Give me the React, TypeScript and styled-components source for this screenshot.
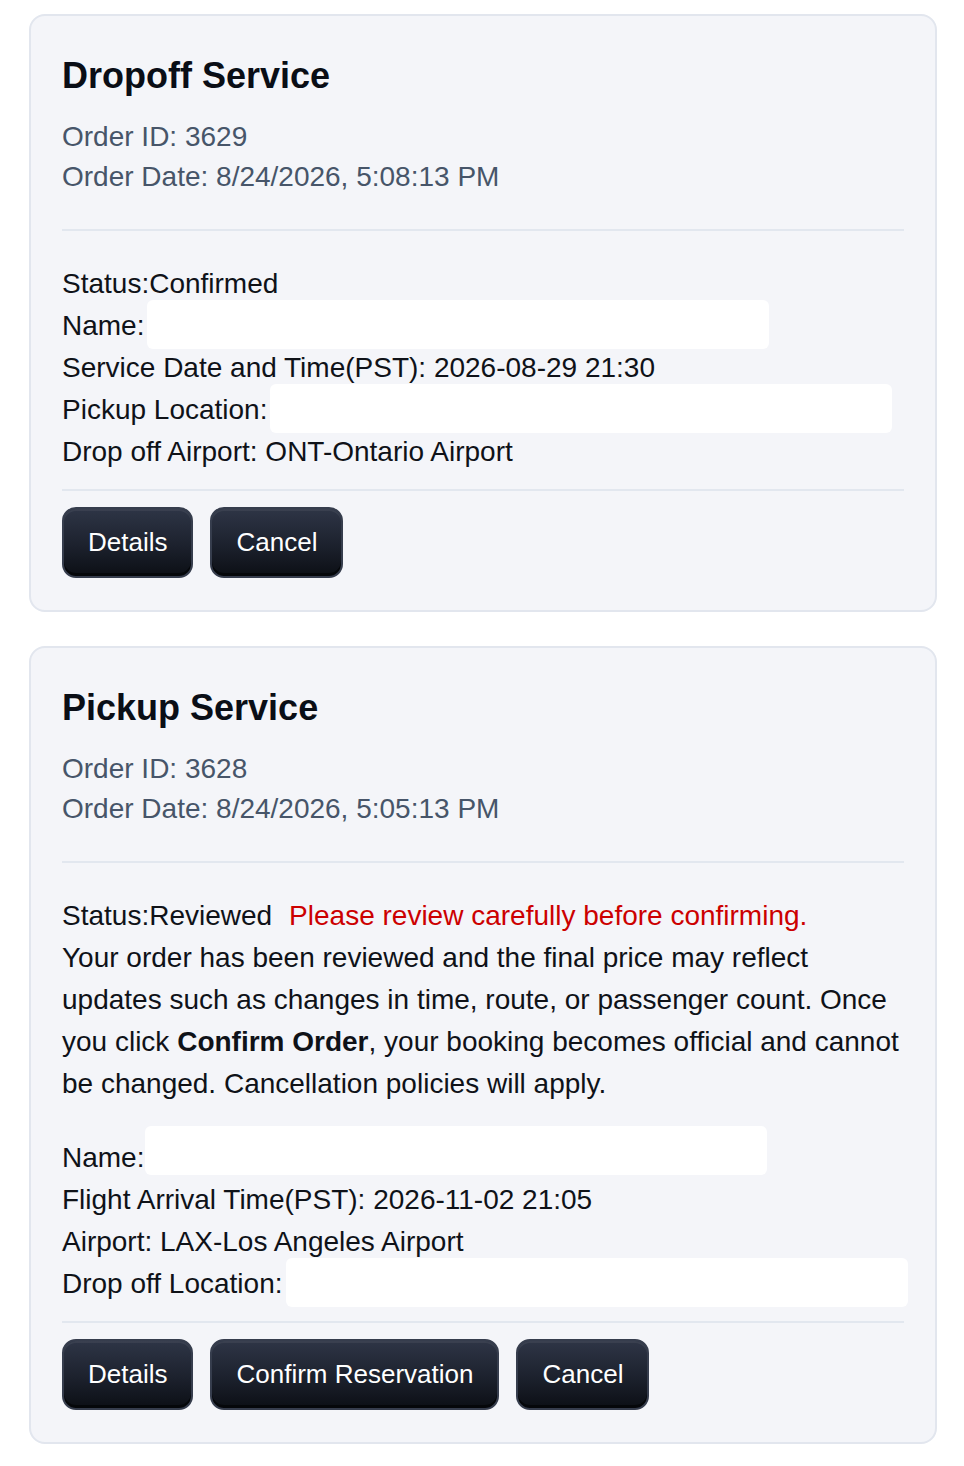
import React from "react";
import styled, { createGlobalStyle } from "styled-components";

const GlobalStyle = createGlobalStyle`
  html, body {
    margin: 0;
    padding: 0;
    background: #ffffff;
  }
  body {
    font-family: "Liberation Sans", Arial, Helvetica, sans-serif;
    color: #0f1218;
  }
  * { box-sizing: border-box; }
`;

const Page = styled.main`
  display: flex;
  flex-direction: column;
  gap: 34px;
  padding: 14px 27px 22px 29px;
`;

const Card = styled.section`
  background: #f4f5f9;
  border: 2px solid #e2e6ee;
  border-radius: 16px;
  padding: 32px 31px 32px 31px;
`;

const Title = styled.h2`
  margin: 0 0 13px;
  font-size: 36px;
  line-height: 56px;
  font-weight: 700;
  color: #0a0e16;
`;

const Meta = styled.div`
  font-size: 28px;
  line-height: 40px;
  color: #475569;
`;

const Divider = styled.hr<{ $space: number }>`
  border: 0;
  height: 2px;
  background: #e2e7ef;
  margin: ${(p) => p.$space}px 0;
`;

const Details = styled.div`
  font-size: 28px;
  line-height: 42px;
  color: #0f1218;
`;

const Line = styled.div`
  white-space: nowrap;
`;

const Warning = styled.span`
  color: #cc0000;
  margin-left: 17px;
`;

const Notice = styled.p`
  margin: 0 0 32px;
  padding-right: 2px;
`;

const Redacted = styled.span<{ $shift?: number; $gap?: number }>`
  display: inline-block;
  vertical-align: top;
  width: 622px;
  height: 49px;
  background: #ffffff;
  border-radius: 6px;
  margin-top: ${(p) => -(p.$shift ?? 5)}px;
  margin-bottom: ${(p) => (p.$shift ?? 5) - 7}px;
  margin-left: ${(p) => p.$gap ?? 3}px;
`;

const ButtonRow = styled.div`
  display: flex;
  gap: 17px;
`;

const Button = styled.button`
  display: inline-flex;
  align-items: center;
  justify-content: center;
  height: 71px;
  padding: 0 24px;
  border: 2px solid #363d4d;
  border-radius: 14px;
  background: linear-gradient(180deg, #2e3546 0%, #1c212d 55%, #0c0f15 100%);
  box-shadow: inset 0 -3px 0 #05070a, inset 0 2px 0 rgba(255, 255, 255, 0.06);
  color: #ffffff;
  font-family: "Liberation Sans", Arial, Helvetica, sans-serif;
  font-size: 26px;
  font-weight: 400;
  cursor: pointer;
`;

export default function App() {
  return (
    <>
      <GlobalStyle />
      <Page>
        <Card>
          <Title>Dropoff Service</Title>
          <Meta>
            <div>Order ID: 3629</div>
            <div>Order Date: 8/24/2026, 5:08:13 PM</div>
          </Meta>
          <Divider $space={32} />
          <Details>
            <Line>Status:Confirmed</Line>
            <Line>
              Name:<Redacted />
            </Line>
            <Line>Service Date and Time(PST): 2026-08-29 21:30</Line>
            <Line>
              Pickup Location:<Redacted />
            </Line>
            <Line>Drop off Airport: ONT-Ontario Airport</Line>
          </Details>
          <Divider $space={16} />
          <ButtonRow>
            <Button>Details</Button>
            <Button>Cancel</Button>
          </ButtonRow>
        </Card>

        <Card>
          <Title>Pickup Service</Title>
          <Meta>
            <div>Order ID: 3628</div>
            <div>Order Date: 8/24/2026, 5:05:13 PM</div>
          </Meta>
          <Divider $space={32} />
          <Details>
            <Line>
              Status:Reviewed
              <Warning>Please review carefully before confirming.</Warning>
            </Line>
            <Notice>
              Your order has been reviewed and the final price may reflect
              updates such as changes in time, route, or passenger count. Once
              you click <b>Confirm Order</b>, your booking becomes official and
              cannot be changed. Cancellation policies will apply.
            </Notice>
            <Line>
              Name:<Redacted $shift={11} $gap={1} />
            </Line>
            <Line>Flight Arrival Time(PST): 2026-11-02 21:05</Line>
            <Line>Airport: LAX-Los Angeles Airport</Line>
            <Line>
              Drop off Location:<Redacted />
            </Line>
          </Details>
          <Divider $space={16} />
          <ButtonRow>
            <Button>Details</Button>
            <Button>Confirm Reservation</Button>
            <Button>Cancel</Button>
          </ButtonRow>
        </Card>
      </Page>
    </>
  );
}
